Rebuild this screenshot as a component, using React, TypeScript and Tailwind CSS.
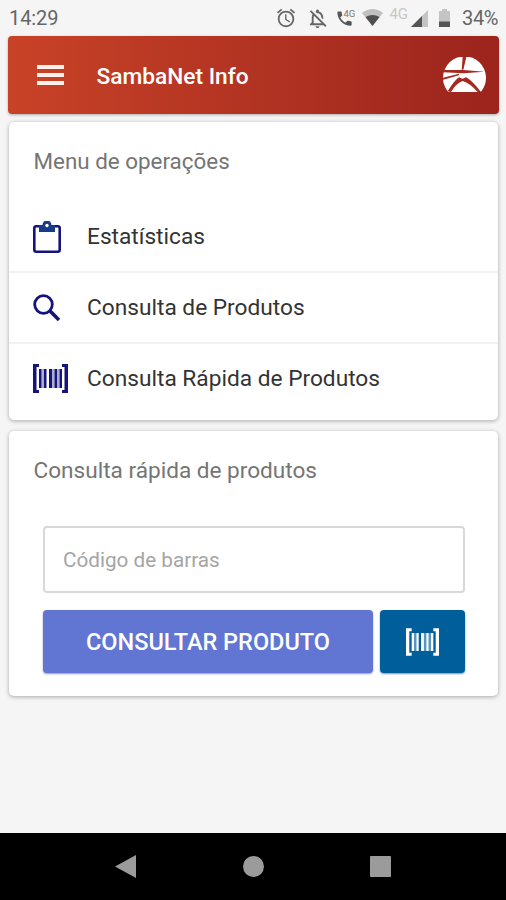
import React from 'react';
import { MdOutlineAlarm, MdOutlineNotificationsOff, MdPhone } from 'react-icons/md';

export default function App() {
  return (
    <div className="flex h-[900px] w-[506px] flex-col overflow-hidden bg-[#f5f5f5] font-[Roboto,sans-serif]">
      <StatusBar />
      <Header />

      {/* Menu */}
      <section className="ml-[9px] mr-2 mt-2 h-[298px] rounded-[5px] bg-white shadow-[0_1px_4px_rgba(0,0,0,0.32)]">
        <h2 className="h-[78px] pl-[24.5px] pt-[23px] text-[22.4px] leading-[32px] text-[#757575]">Menu de operações</h2>
        <MenuItem icon={<ClipboardIcon />} label="Estatísticas" first />
        <MenuItem icon={<SearchIcon />} label="Consulta de Produtos" />
        <MenuItem icon={<BarcodeIcon className="h-[29px] w-[35px]" />} label="Consulta Rápida de Produtos" />
      </section>

      {/* Quick lookup */}
      <section className="ml-[9px] mr-2 mt-[11px] h-[265px] rounded-[5px] bg-white px-[34px] shadow-[0_1px_4px_rgba(0,0,0,0.32)]">
        <h2 className="-ml-[9.5px] h-[95px] pt-[24px] text-[22.6px] leading-[32px] text-[#757575]">Consulta rápida de produtos</h2>
        <input
          className="block h-[67px] w-[422px] rounded-[4px] border-2 border-[#d8d8d8] bg-white pl-[18px] text-[20.7px] placeholder:text-[#a5a5a5]"
          placeholder="Código de barras"
        />
        <div className="mt-[17px] flex w-[422px] gap-[7px]">
          <button className="h-[63px] w-[330px] rounded-[4px] bg-[#6176d2] pt-[3px] text-[23.5px] font-medium text-white shadow-[0_1px_2px_rgba(40,50,120,0.5)]">
            CONSULTAR PRODUTO
          </button>
          <button className="flex h-[63px] flex-1 items-center justify-center rounded-[4px] bg-[#005f9b] text-white shadow-[0_1px_2px_rgba(0,40,100,0.5)]">
            <BarcodeIcon className="h-[28px] w-[33px]" />
          </button>
        </div>
      </section>

      <NavBar />
    </div>
  );
}

function StatusBar() {
  return (
    <div className="flex h-9 shrink-0 items-center pl-[9px] pr-2 text-[20px] text-[#666]">
      <span className="tracking-[-0.1px]">14:29</span>
      <div className="ml-auto flex items-center">
        <MdOutlineAlarm className="mr-[9px] size-[22px]" />
        <MdOutlineNotificationsOff className="mr-[7px] size-[23px]" />
        <svg className="mr-[6px] h-[20px] w-[20px]" viewBox="0 0 20 20">
          <MdPhone x="-1" y="1" size="19" color="#555" />
          <text x="7.5" y="8.5" fontSize="9.5" fill="#777">4G</text>
        </svg>
        <svg className="mr-[6px] h-[18px] w-[21px]" viewBox="0 0 21 18">
          <path d="M0 4Q10.5-4 21 4L10.5 17Z" fill="#c0c0c0" />
          <path d="M3.5 8Q10.5 4 17.5 8L10.5 17Z" fill="#505050" />
        </svg>
        <span className="mb-[7px] mr-[3px] text-[15px] leading-none text-[#c8c8c8]">4G</span>
        <svg className="mr-[11px] h-[17px] w-[17px]" viewBox="0 0 17 17">
          <path d="M17 0V17H0Z" fill="#c4c4c4" />
          <path d="M11 6V17H0Z" fill="#555" />
        </svg>
        <svg className="mr-[12px] h-[18px] w-[11px]" viewBox="0 0 11 18">
          <path d="M3 0H8V2H11V18H0V2H3Z" fill="#c4c4c4" />
          <path d="M0 12.5H11V18H0Z" fill="#555" />
        </svg>
        <span className="tracking-[-0.4px]">34%</span>
      </div>
    </div>
  );
}

function Header() {
  return (
    <header className="ml-2 mr-[7px] flex h-[78px] shrink-0 items-center rounded-[4px] bg-linear-to-r from-[#c84227] to-[#9c241d] pl-[29px] pr-[13px] shadow-[0_1px_3px_rgba(0,0,0,0.3)]">
      <div className="flex w-[27px] flex-col gap-[4px]">
        <span className="h-[4px] bg-[#fff0ec]" />
        <span className="h-[4px] bg-[#fff0ec]" />
        <span className="h-[4px] bg-[#fff0ec]" />
      </div>
      <h1 className="ml-[32.5px] pt-[4px] text-[22.7px] font-medium text-white">SambaNet Info</h1>
      <Logo />
    </header>
  );
}

function Logo() {
  return (
    <svg className="ml-auto h-[36px] w-[43px]" viewBox="0 0 129 108">
      <path d="M16 105A64.5 64.5 0 1 1 113 105Z" fill="#fff" />
      <g fill="#a52920">
        <path d="M59 0H70L61 38H56Z" />
        <path d="M0 39H62L124 44L62 49L0 46Z" />
        <path d="M0 62L48 50V55L0 68Z" />
        <path d="M14 103Q34 70 48 61L58 65L70 61Q88 72 114 105H104Q80 78 59 72Q40 78 24 105Z" />
      </g>
    </svg>
  );
}

function MenuItem({ icon, label, first }: { icon: React.ReactNode; label: string; first?: boolean }) {
  return (
    <div className={`flex h-[71px] items-center pl-[24px] ${first ? 'pt-[2px]' : 'border-t-2 border-[#f2f2f2]'}`}>
      <div className="flex w-[54px] items-center">{icon}</div>
      <span className="pt-[2px] text-[22.7px] text-[#333]">{label}</span>
    </div>
  );
}

function ClipboardIcon() {
  return (
    <svg className="h-[32px] w-[28px]" viewBox="0 0 28 32" fill="none">
      <rect x="1.3" y="5.3" width="25.4" height="25.4" rx="2" stroke="#14147c" strokeWidth="2.6" />
      <path d="M6 4H9.5A4.5 4.5 0 0 1 18.5 4H22V11H6Z" fill="#173b86" />
      <circle cx="14" cy="4.5" r="1.7" fill="#fff" />
    </svg>
  );
}

function SearchIcon() {
  return (
    <svg className="h-[28px] w-[28px]" viewBox="0 0 28 28" fill="none" stroke="#14147c">
      <circle cx="10.5" cy="10.5" r="8.8" strokeWidth="2.8" />
      <path d="M16.8 16.8L26 26" strokeWidth="3.6" />
    </svg>
  );
}

function BarcodeIcon({ className }: { className?: string }) {
  return (
    <svg className={`text-[#14147c] in-[button]:text-white ${className}`} viewBox="0 0 35 29" fill="currentColor">
      <path d="M0 0H6V3H3.5V26H6V29H0Z" />
      <path d="M35 0H29V3H31.5V26H29V29H35Z" />
      <path d="M6 5H8.5V24H6ZM11 5H13.5V24H11ZM16 5H19V24H16ZM21.5 5H24V24H21.5ZM26.5 5H29V24H26.5Z" />
      <path d="M8.5 5H11V24H8.5ZM19 5H21.5V24H19ZM24 5H26.5V24H24Z" opacity="0.35" />
    </svg>
  );
}

function NavBar() {
  return (
    <nav className="mt-auto flex h-[67px] shrink-0 items-center justify-between bg-black pl-[115px] pr-[115px]">
      <svg className="h-[23px] w-[21px]" viewBox="0 0 21 23" fill="#9b9b9b">
        <path d="M21 0V23L0 11.5Z" />
      </svg>
      <span className="size-[21px] rounded-full bg-[#9b9b9b]" />
      <span className="size-[21px] rounded-[1px] bg-[#9b9b9b]" />
    </nav>
  );
}
